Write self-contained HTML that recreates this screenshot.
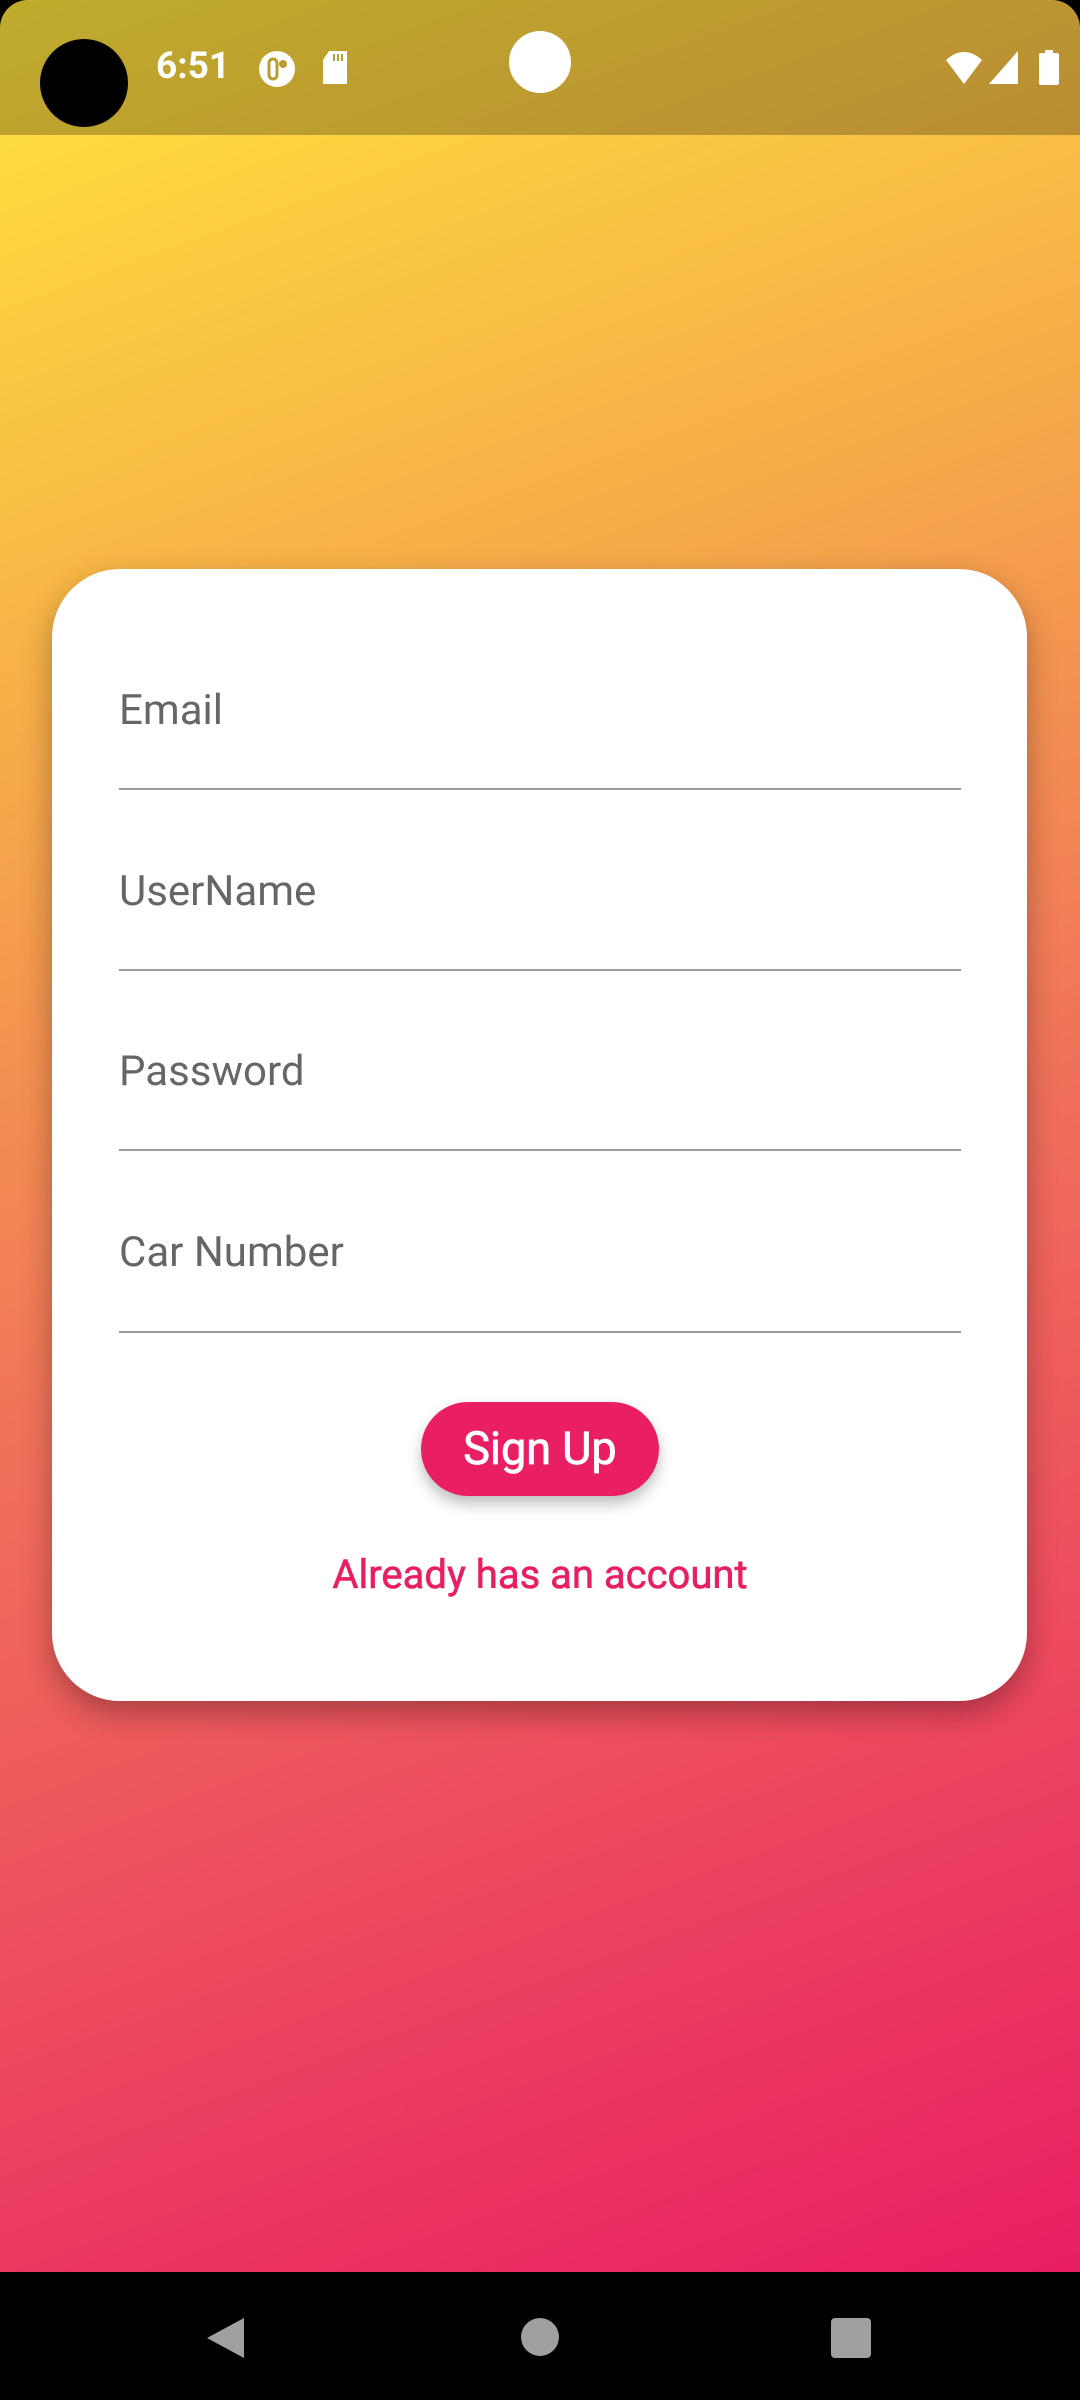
<!DOCTYPE html>
<html><head><meta charset="utf-8"><style>
html,body{margin:0;padding:0}
body{width:1080px;height:2400px;position:relative;overflow:hidden;font-family:"Roboto","Liberation Sans",sans-serif;background:#000}
.bg{position:absolute;left:0;top:0;width:1080px;height:2272px;background:linear-gradient(160deg,#ffe53b 0%,#f6a84a 30%,#f0705a 55%,#e91e63 100%);border-radius:28px 28px 0 0}
.sb{position:absolute;left:0;top:0;width:1080px;height:135px;background:rgba(0,0,0,0.25);border-radius:28px 28px 0 0}
.cam{position:absolute;left:40px;top:39px;width:88px;height:88px;border-radius:50%;background:#000}
.time{position:absolute;left:156px;top:45px;color:#fff;font-size:37px;font-weight:bold}
.dot{position:absolute;left:509px;top:31px;width:62px;height:62px;border-radius:50%;background:#fff}
.card{position:absolute;left:52px;top:569px;width:975px;height:1132px;background:#fff;border-radius:68px;box-shadow:0 12px 30px rgba(0,0,0,0.3)}
.lbl{position:absolute;left:119px;color:#666;font-size:42px}
.ln{position:absolute;left:119px;width:842px;height:2px;background:#9a9a9a}
.btn{position:absolute;left:421px;top:1402px;width:238px;height:94px;border-radius:47px;background:#e91e63;color:#fff;font-size:45px;text-align:center;line-height:94px;box-shadow:0 8px 14px rgba(0,0,0,0.25);-webkit-text-stroke:0.8px #fff}
.link{position:absolute;left:0;width:1080px;top:1551px;text-align:center;color:#e91e63;font-size:40px;-webkit-text-stroke:0.6px #e91e63}
.nav{position:absolute;left:0;top:2272px;width:1080px;height:128px;background:#000}
</style></head><body>
<div class="bg"></div>
<div class="sb"></div>
<div class="cam"></div>
<div class="time">6:51</div>
<svg style="position:absolute;left:258px;top:50px" width="40" height="38" viewBox="0 0 40 38"><ellipse cx="19" cy="19" rx="18" ry="18" fill="#fff"/><rect x="11" y="9" width="8" height="20" rx="4" fill="none" stroke="#b99d30" stroke-width="3"/><circle cx="25" cy="14" r="4" fill="#b99d30"/></svg>
<svg style="position:absolute;left:320px;top:50px" width="30" height="36" viewBox="0 0 30 36"><path d="M9 1H27V34H3V10Z" fill="#fff"/><path d="M14 4v7M18 4v7M22 4v7" stroke="#b99d30" stroke-width="2"/></svg>
<div class="dot"></div>
<svg style="position:absolute;left:944px;top:50px" width="40" height="36" viewBox="0 0 40 36"><path d="M2 10Q20 -6 38 10L20 34Z" fill="#fff"/></svg>
<svg style="position:absolute;left:988px;top:50px" width="32" height="36" viewBox="0 0 32 36"><path d="M30 1V34H1Z" fill="#fff"/></svg>
<svg style="position:absolute;left:1038px;top:50px" width="22" height="36" viewBox="0 0 22 36"><rect x="7" y="0" width="8" height="4" fill="#fff"/><rect x="1" y="3" width="20" height="32" rx="2" fill="#fff"/></svg>
<div class="card"></div>
<div class="lbl" style="top:686px">Email</div>
<div class="ln" style="top:788px"></div>
<div class="lbl" style="top:867px">UserName</div>
<div class="ln" style="top:969px"></div>
<div class="lbl" style="top:1047px">Password</div>
<div class="ln" style="top:1149px"></div>
<div class="lbl" style="top:1228px">Car Number</div>
<div class="ln" style="top:1331px"></div>
<div class="btn">Sign Up</div>
<div class="link">Already has an account</div>
<div class="nav">
<svg style="position:absolute;left:204px;top:44px" width="42" height="44" viewBox="0 0 42 44"><path d="M40 2V42L3 22Z" fill="#a0a0a0"/></svg>
<div style="position:absolute;left:521px;top:46px;width:38px;height:38px;border-radius:50%;background:#a0a0a0"></div>
<div style="position:absolute;left:831px;top:46px;width:40px;height:40px;border-radius:4px;background:#a0a0a0"></div>
</div>
</body></html>
